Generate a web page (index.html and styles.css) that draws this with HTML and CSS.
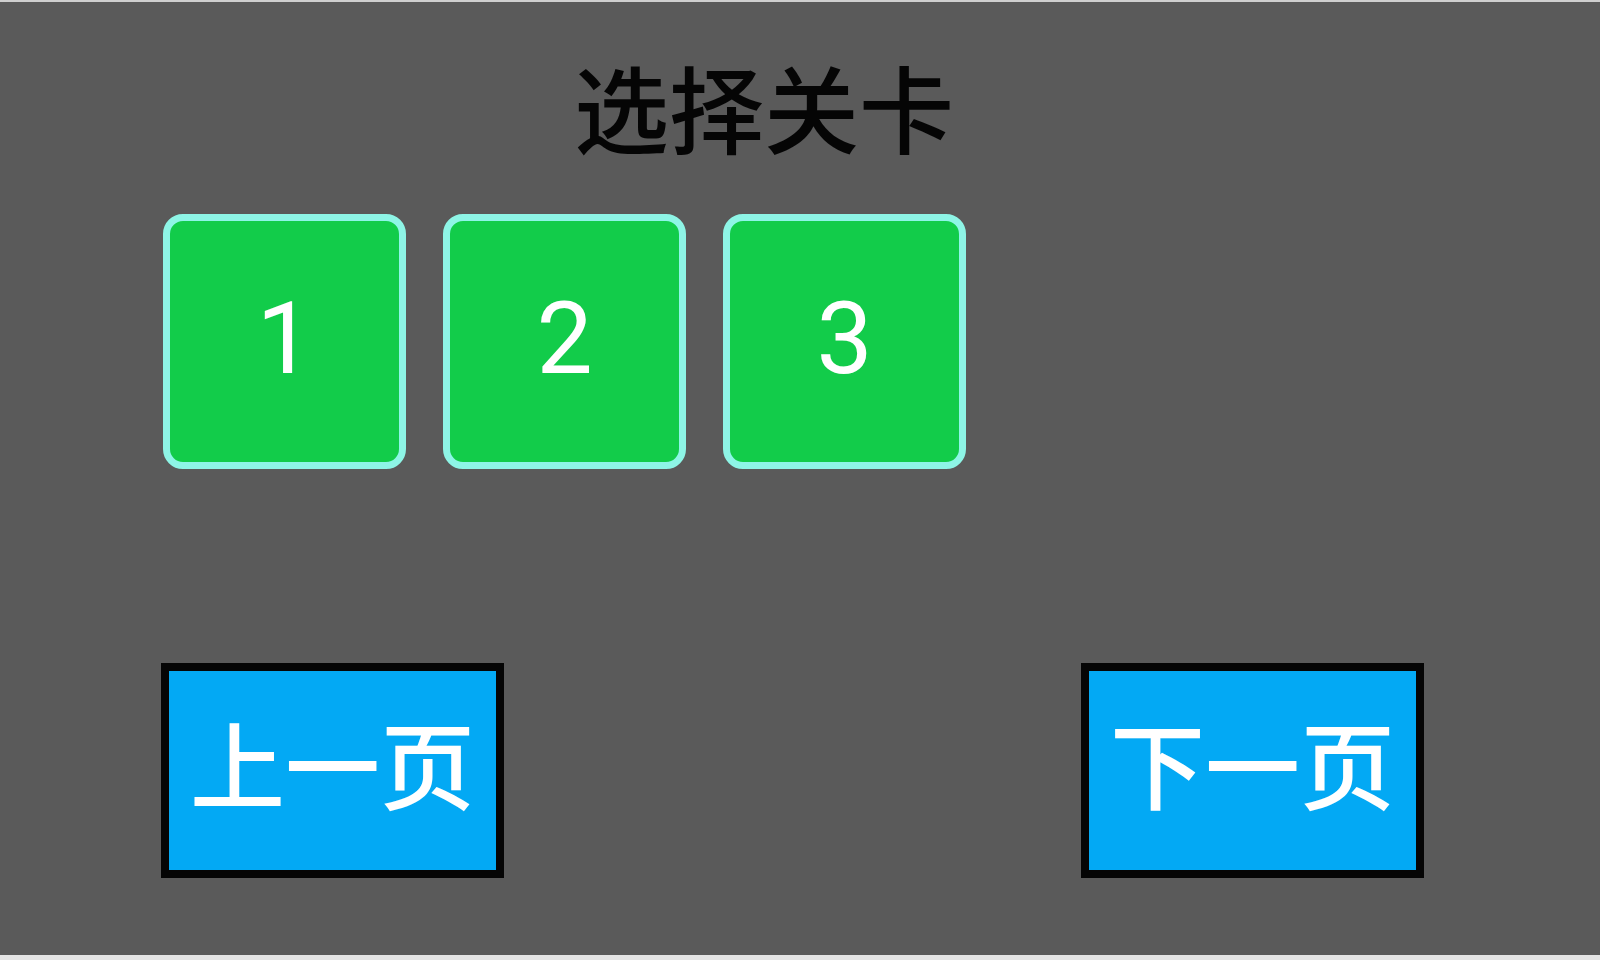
FILE: index.html
```html
<!DOCTYPE html>
<html lang="zh-CN">
<head>
    <meta charset="UTF-8">
    <meta name="viewport" content="width=device-width, initial-scale=1.0">
    <title>选择关卡</title>
    <link rel="stylesheet" href="styles.css">
</head>
<body>
    <div class="screen">
        <h1 class="title">选择关卡</h1>

        <div class="levels">
            <div class="level">1</div>
            <div class="level">2</div>
            <div class="level">3</div>
        </div>

        <div class="pager">
            <div class="page-btn">上一页</div>
            <div class="page-btn">下一页</div>
        </div>
    </div>
</body>
</html>
```

FILE: styles.css
```css
    * {
        margin: 0;
        padding: 0;
        box-sizing: border-box;
    }

    html, body {
        width: 100%;
        height: 100%;
        overflow: hidden;
        background: #e4e4e4;
    }

    .screen {
        height: 955px;
        background: #5a5a5a;
        border-top: 2px solid #cfcfcf;
        display: flex;
        flex-direction: column;
    }

    .title {
        margin-top: 56px;
        padding-left: 574px;
        font-family: "Noto Sans CJK SC", "Noto Sans", sans-serif;
        font-size: 95px;
        font-weight: 500;
        line-height: 95px;
        color: #050505;
    }

    .levels {
        display: flex;
        gap: 37px;
        margin-top: 61px;
        padding-left: 163px;
    }

    .level {
        width: 243px;
        height: 255px;
        display: flex;
        justify-content: center;
        align-items: center;
        padding-bottom: 6px;
        background: #12cc4a;
        border: 7px solid #8ef5e6;
        border-radius: 20px;
        font-family: Roboto, "Liberation Sans", sans-serif;
        font-size: 100px;
        line-height: 1;
        color: #fff;
    }

    .pager {
        display: flex;
        justify-content: space-between;
        margin-top: 194px;
        padding: 0 176px 0 161px;
    }

    .page-btn {
        width: 343px;
        height: 215px;
        display: flex;
        justify-content: center;
        align-items: center;
        padding-bottom: 18px;
        background: #03a9f4;
        border: 8px solid #050505;
        font-family: "Noto Sans CJK SC", "Noto Sans", sans-serif;
        font-size: 95px;
        font-weight: 500;
        line-height: 1;
        color: #fff;
    }
```
